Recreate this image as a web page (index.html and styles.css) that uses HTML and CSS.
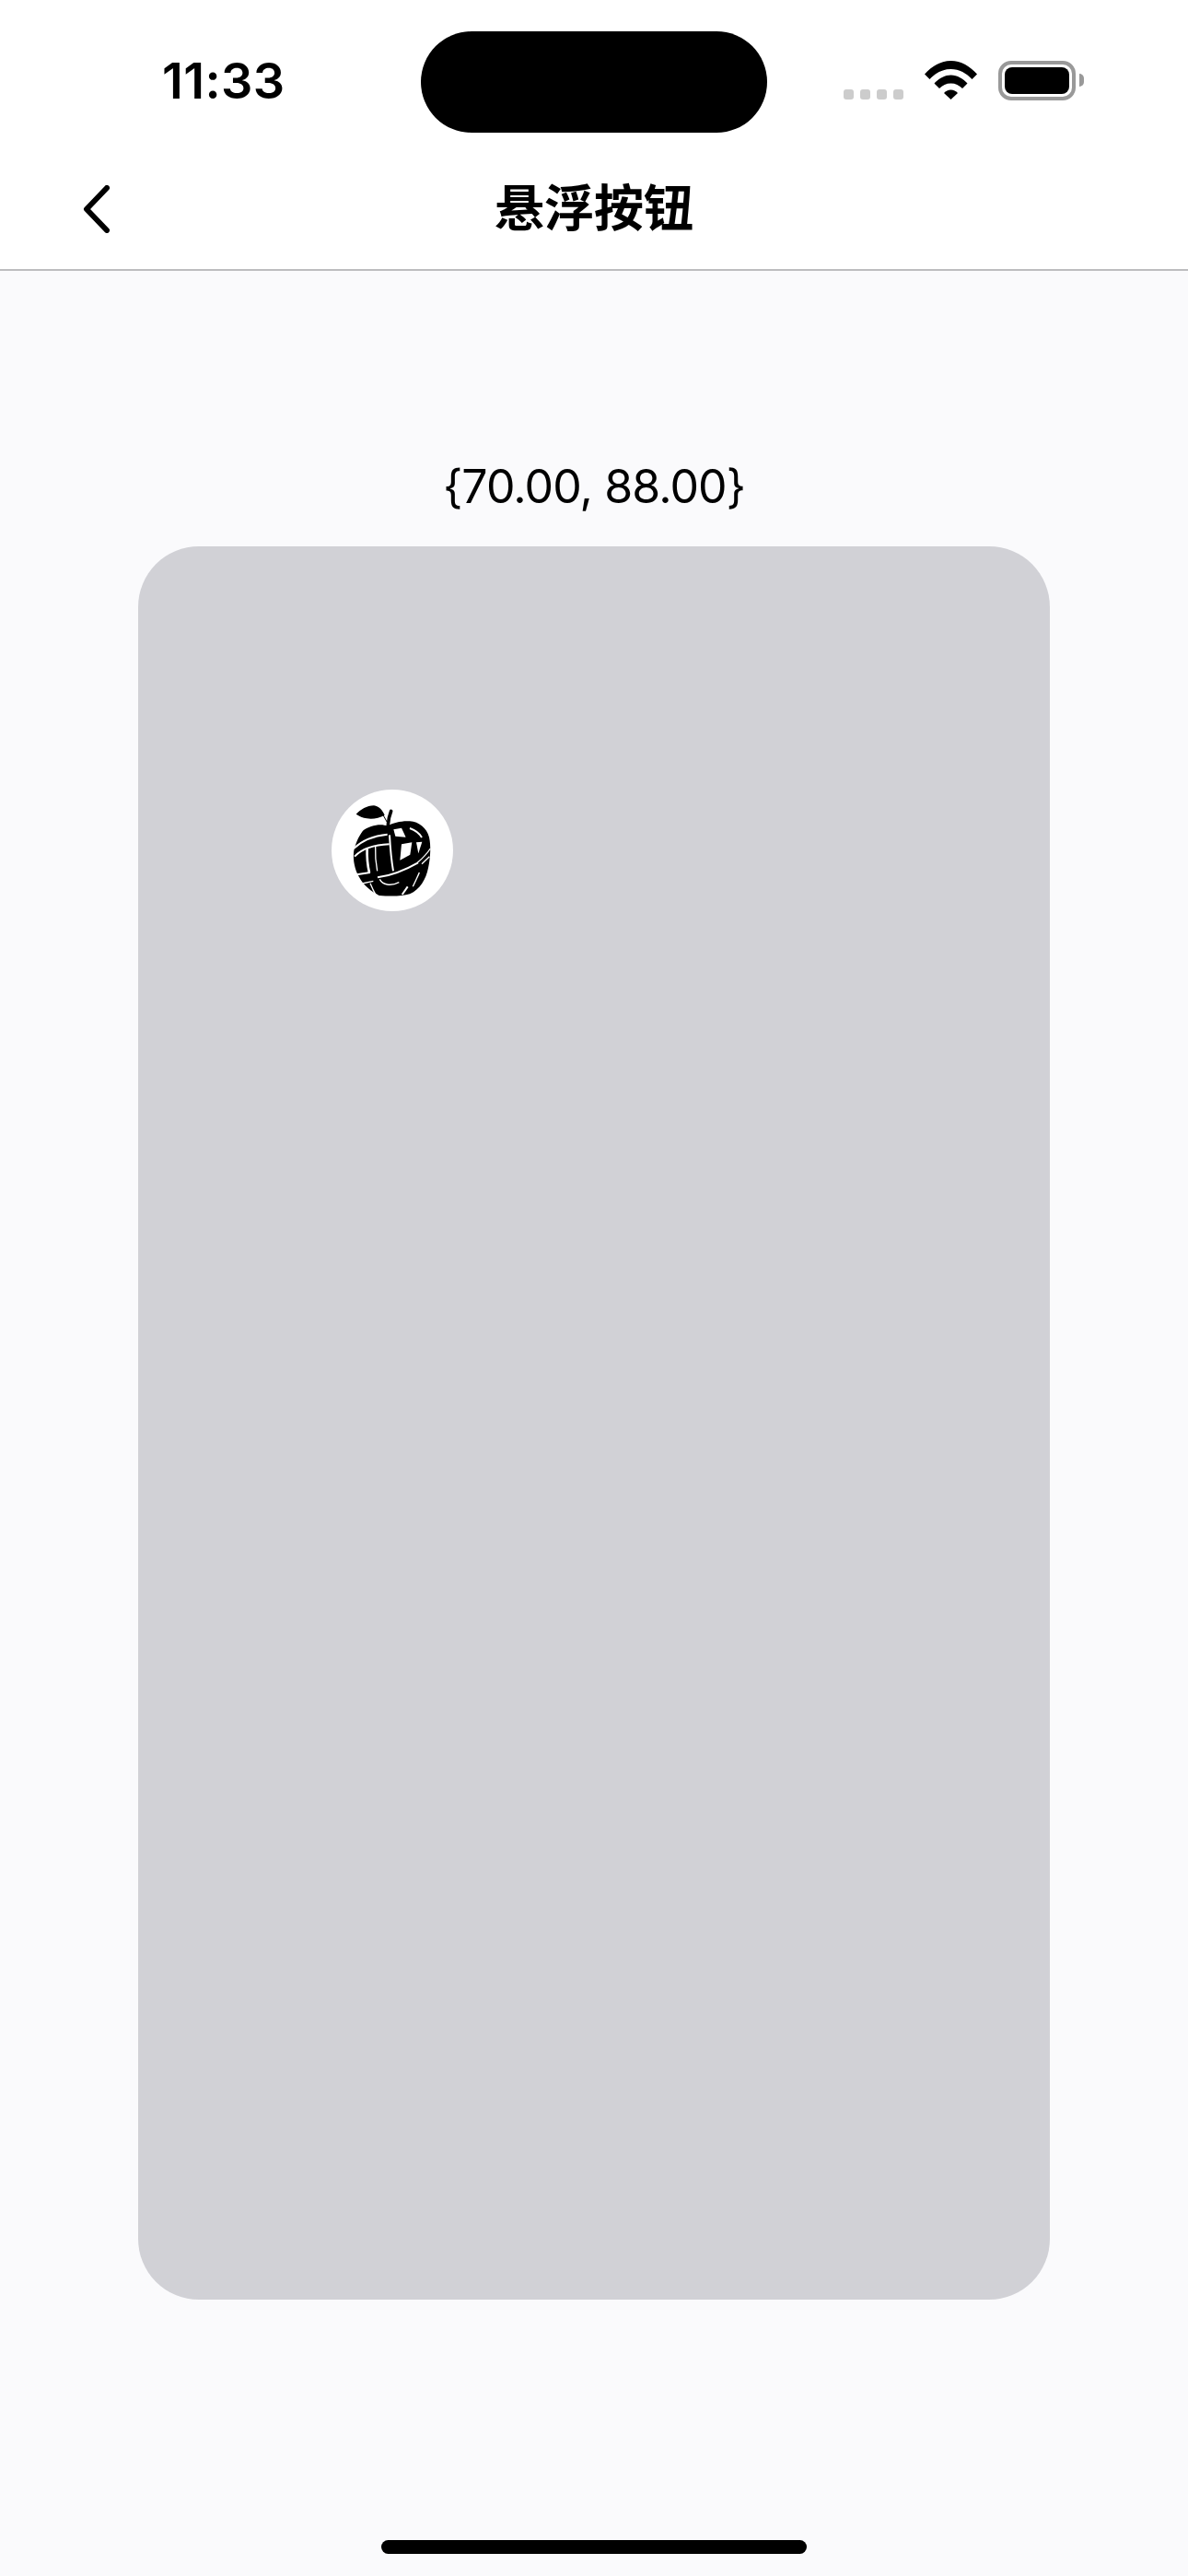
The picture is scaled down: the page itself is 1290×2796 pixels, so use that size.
FILE: index.html
```html
<!DOCTYPE html>
<html lang="zh-CN">
<head>
  <meta charset="UTF-8">
  <meta name="viewport" content="width=device-width, initial-scale=1.0">
  <title>悬浮按钮</title>
  <link rel="stylesheet" href="styles.css">
</head>
<body>
  <div class="page">
    <!-- Status bar -->
    <div class="status-bar">
      <span class="time">11:33</span>
      <div class="island"></div>
      <div class="status-icons">
        <div class="signal">
          <span></span><span></span><span></span><span></span>
        </div>
        <svg class="wifi" viewBox="0 0 57 42">
          <path d="M0 14.5C7.5 6 17.5 0 28.5 0S49.500 6 57 14.500L51.500 20C45.500 13.500 37.500 9 28.500 9S11.500 13.500 5.500 20Z"/>
          <path d="M10.500 24.500C15 19.500 21.500 15.500 28.500 15.500S42 19.500 46.500 24.500L41 30C37.500 26.500 33.500 24.500 28.500 24.500S19.500 26.500 16 30Z"/>
          <path d="M21 35C23 33 25.500 31.500 28.500 31.500S34 33 36 35L28.500 42Z"/>
        </svg>
        <div class="battery">
          <div class="battery-level"></div>
        </div>
        <div class="battery-cap"></div>
      </div>
    </div>

    <!-- Nav bar -->
    <div class="nav-bar">
      <svg class="back" viewBox="0 0 30 52">
        <path d="M26 3L4 26L26 49"/>
      </svg>
      <h1>悬浮按钮</h1>
      <div></div>
    </div>

    <div class="content">
      <p class="position">{70.00, 88.00}</p>
      <div class="drag-area">
        <div class="float-button">
          <svg class="logo" viewBox="90 80 396 396">
            <!-- leaf and stem -->
            <path class="ink" d="M170 160C185 145 205 132 228 132C245 134 256 148 263 163C245 172 225 178 205 174C192 172 180 167 170 160Z"/>
            <path class="leaf-line" d="M250 148L273 190"/>
            <path class="stem" d="M274 195C275 180 278 165 284 150"/>
            <!-- apple body -->
            <path class="ink" d="M192 214C210 200 240 192 262 196L274 198C290 188 320 181 345 183C375 185 400 205 408 235C414 262 413 300 405 335C398 372 378 405 345 420C320 428 280 428 245 425C222 412 195 395 180 365C165 340 160 310 162 285C165 262 178 232 192 214Z"/>
            <!-- globe grid, cut out of the apple -->
            <path class="window" d="M292 210L318 205L332 235L298 232Z"/>
            <path class="window" d="M318 258L352 252L346 292L313 310Z"/>
            <path class="window" d="M366 252L385 250L373 288Z"/>
            <path class="cut" d="M345 206C362 212 376 222 384 236"/>
            <path class="cut" d="M162 272C190 245 230 230 272 226"/>
            <path class="cut" d="M165 298C190 272 230 260 278 258"/>
            <path class="cut wide" d="M206 270C205 295 207 325 213 350"/>
            <path class="cut thin" d="M233 265C232 290 234 320 239 345"/>
            <path class="cut" d="M279 228C281 265 284 305 291 345"/>
            <path class="cut" d="M172 357L216 350"/>
            <path class="cut" d="M240 366C285 360 330 342 372 318"/>
            <path class="cut thin" d="M247 372C256 390 282 396 310 382"/>
            <path class="cut thin" d="M190 386L226 378"/>
            <path class="cut thin" d="M216 385C222 400 228 412 236 427"/>
            <path class="cut thin" d="M370 318C385 305 400 290 412 272"/>
            <path class="cut thin" d="M384 322L409 298"/>
            <path class="cut thin" d="M355 396C362 380 370 365 376 350"/>
            <path class="cut" d="M320 422L338 396"/>
          </svg>
        </div>
      </div>
    </div>

    <div class="home-indicator"></div>
  </div>
</body>
</html>
```

FILE: styles.css
```css
body {
  margin: 0;
  padding: 0;
  background-color: #fafafc;
  font-family: Inter, "Noto Sans CJK SC", sans-serif;
  color: #000000;
}

.page {
  height: 2796px;
  display: flex;
  flex-direction: column;
  overflow: hidden;
}

/* Status bar */
.status-bar {
  height: 168px;
  flex-shrink: 0;
  box-sizing: border-box;
  display: flex;
  align-items: flex-start;
  padding: 34px 0 0 176px;
  background-color: #ffffff;
}

.time {
  width: 281px;
  margin-top: 21px;
  font-size: 54px;
  line-height: 66px;
  font-weight: 600;
  letter-spacing: 0.4px;
}

.island {
  width: 376px;
  height: 110px;
  border-radius: 55px;
  background-color: #000000;
}

.status-icons {
  display: flex;
  align-items: flex-end;
  height: 74px;
  margin-left: 83px;
}

.signal {
  display: flex;
  gap: 7px;
  width: 88px;
}

.signal span {
  width: 11px;
  height: 11px;
  border-radius: 3px;
  background-color: #cccccc;
}

.wifi {
  width: 57px;
  height: 42px;
  fill: #000000;
}

.battery {
  width: 84px;
  height: 43px;
  box-sizing: border-box;
  margin-left: 23px;
  margin-bottom: -1px;
  padding: 3px;
  border: 4px solid #999999;
  border-radius: 14px;
}

.battery-level {
  height: 100%;
  border-radius: 8px;
  background-color: #000000;
}

.battery-cap {
  width: 5px;
  height: 14px;
  margin-left: 4px;
  margin-bottom: 14px;
  border-radius: 0 7px 7px 0;
  background-color: #999999;
}

/* Nav bar */
.nav-bar {
  height: 126px;
  flex-shrink: 0;
  box-sizing: border-box;
  display: grid;
  grid-template-columns: 1fr auto 1fr;
  align-items: center;
  padding: 0 90px 6px;
  background-color: #ffffff;
  border-bottom: 2px solid #bdbdbf;
}

.nav-bar h1 {
  margin: 0 0 8px;
  font-family: "Noto Sans CJK SC", sans-serif;
  font-size: 54px;
  line-height: 70px;
  font-weight: 700;
}

.back {
  width: 30px;
  height: 52px;
  fill: none;
  stroke: #000000;
  stroke-width: 6;
  stroke-linecap: round;
  stroke-linejoin: round;
}

/* Content */
.content {
  flex: 1;
  display: flex;
  flex-direction: column;
  align-items: center;
}

.position {
  margin: 204px 0 35px;
  font-size: 50px;
  line-height: 60px;
  letter-spacing: -0.9px;
}

.drag-area {
  position: relative;
  width: 990px;
  height: 1903px;
  border-radius: 66px;
  background-color: #d1d1d6;
}

.float-button {
  position: absolute;
  left: 210px;
  top: 264px;
  width: 132px;
  height: 132px;
  border-radius: 50%;
  background-color: #ffffff;
}

.logo {
  display: block;
  width: 132px;
  height: 132px;
}

.ink {
  fill: #000000;
}

.window {
  fill: #ffffff;
}

.leaf-line {
  fill: none;
  stroke: #000000;
  stroke-width: 3;
}

.stem {
  fill: none;
  stroke: #000000;
  stroke-width: 11;
  stroke-linecap: round;
}

.cut {
  fill: none;
  stroke: #ffffff;
  stroke-width: 6;
}

.cut.wide {
  stroke-width: 8;
}

.cut.thin {
  stroke-width: 4;
}

.home-indicator {
  position: absolute;
  left: 414px;
  top: 2757px;
  width: 462px;
  height: 15px;
  border-radius: 8px;
  background-color: #000000;
}
```
